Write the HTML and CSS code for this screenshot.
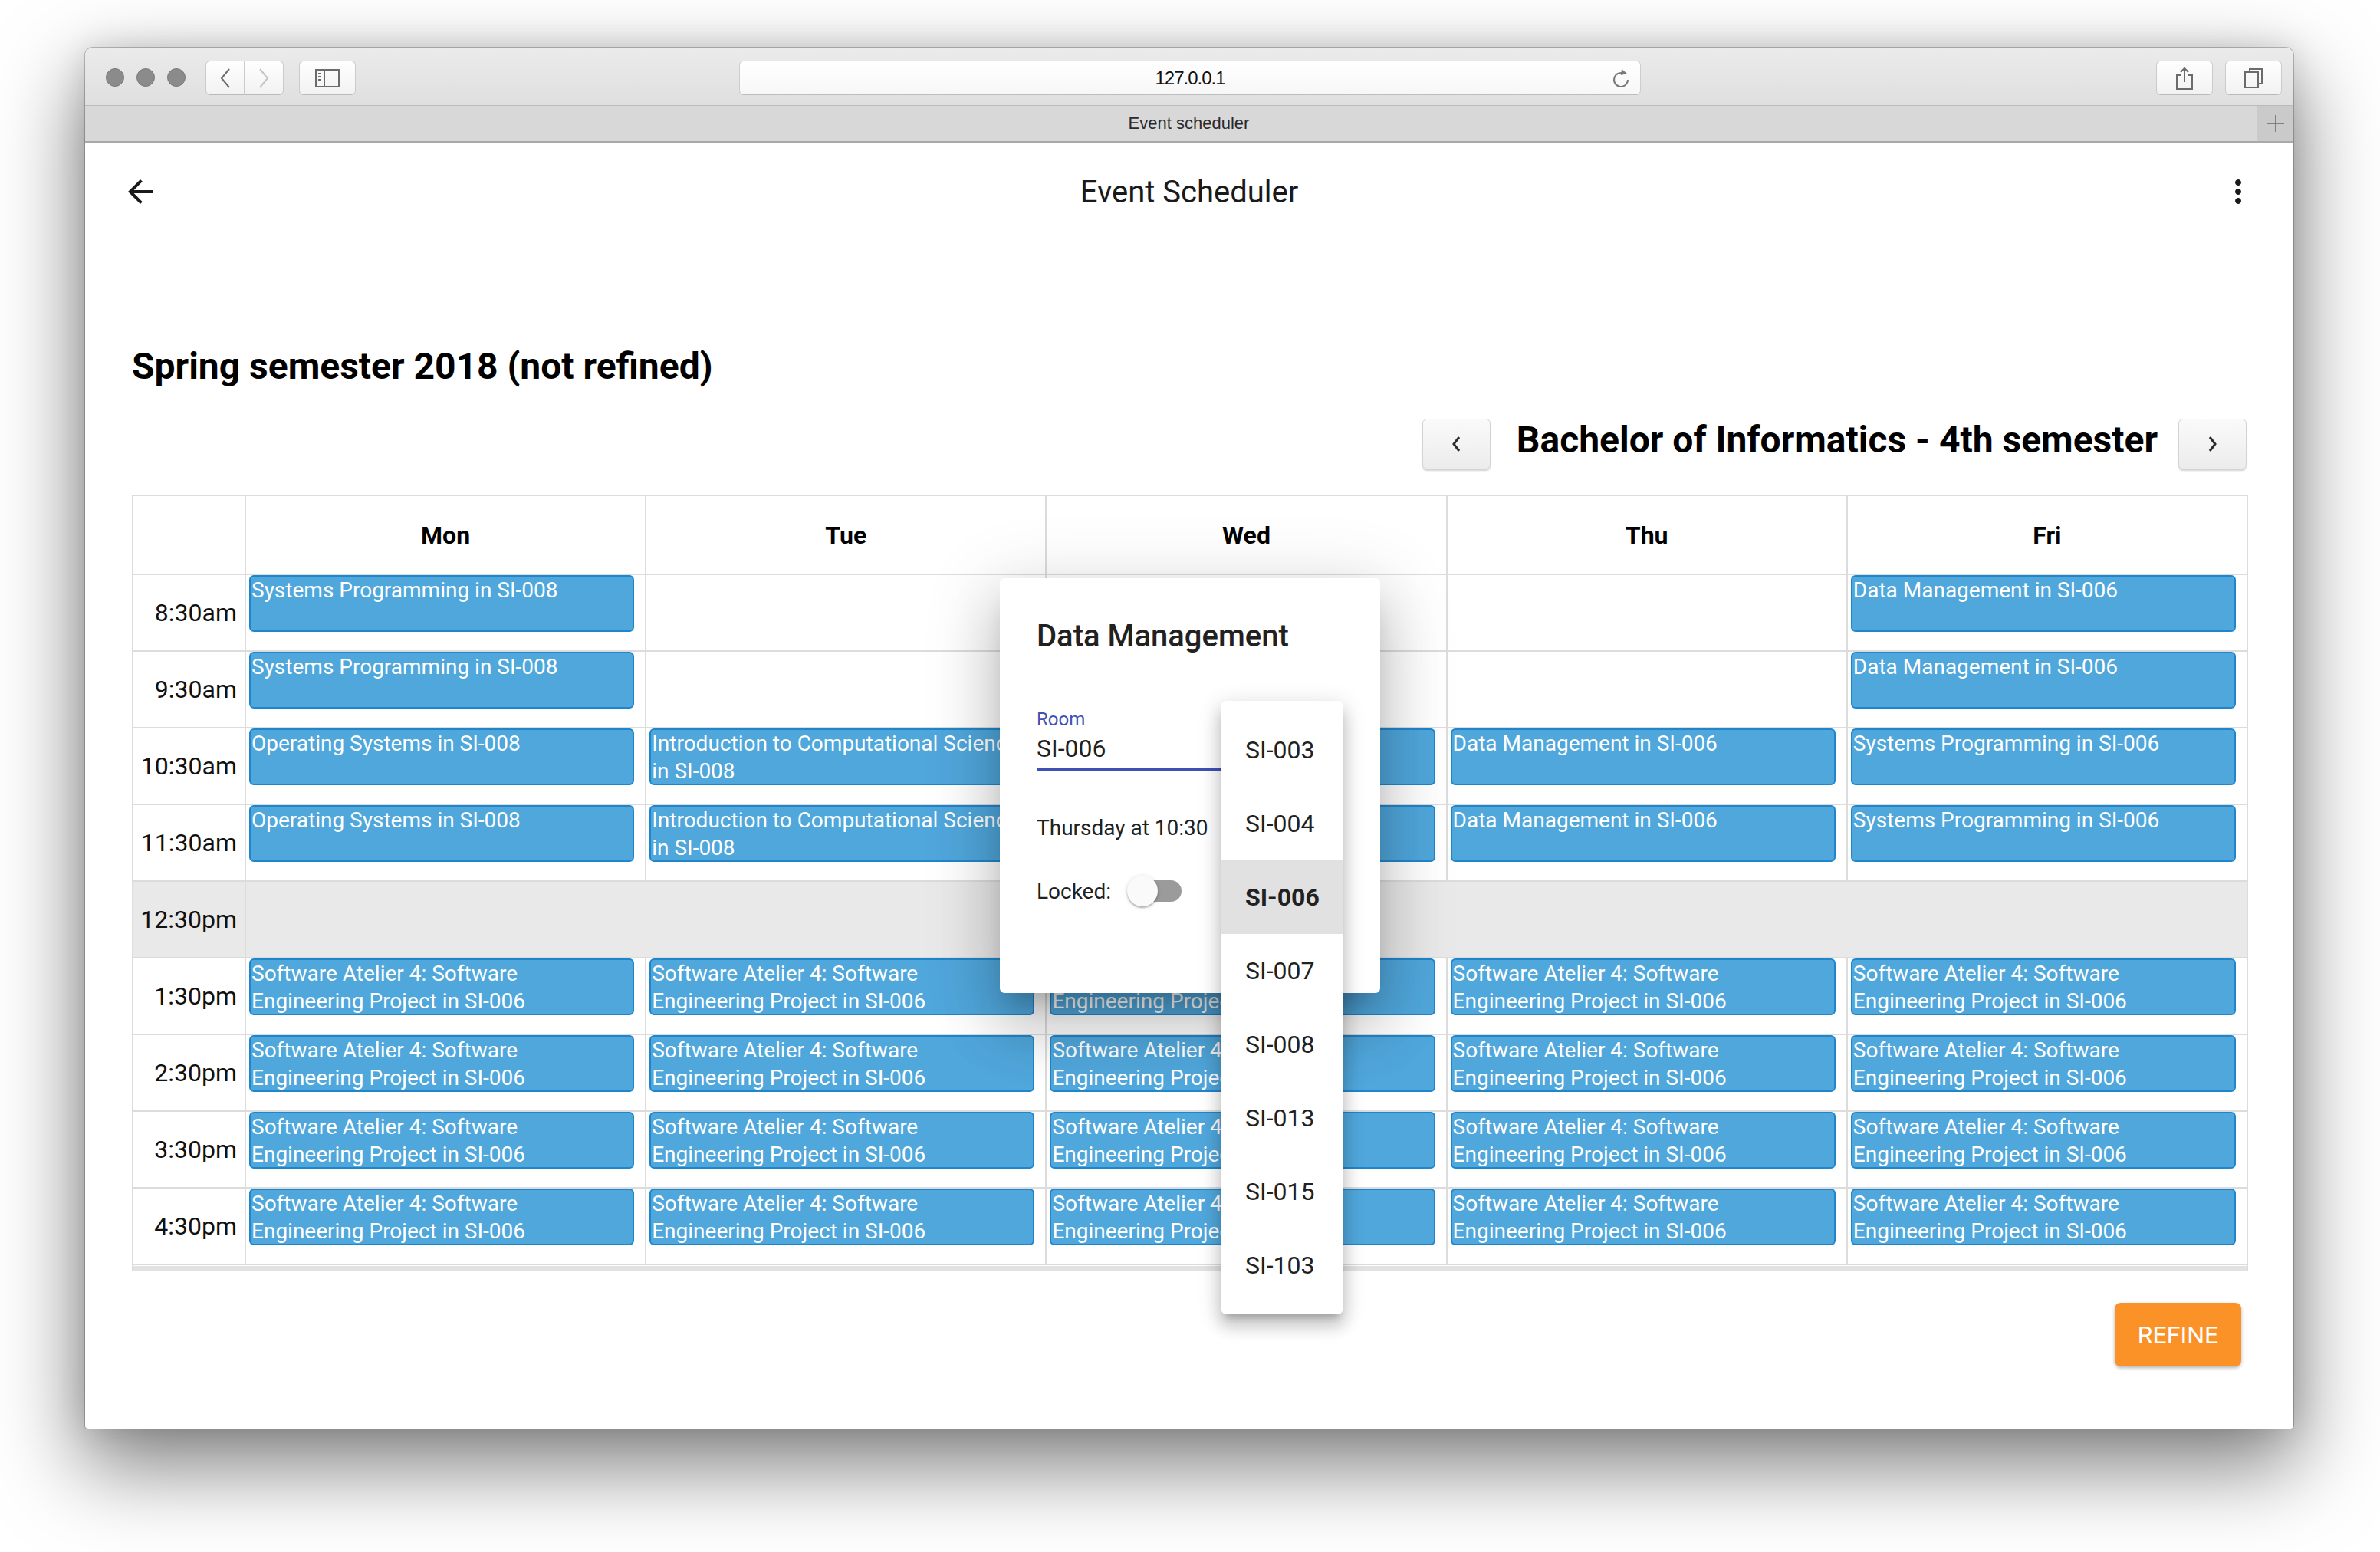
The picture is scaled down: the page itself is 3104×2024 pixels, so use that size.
FILE: index.html
```html
<!DOCTYPE html>
<html lang="en">
<head>
    <meta charset="UTF-8">
    <title>Event scheduler</title>
    <link rel="stylesheet" href="styles.css">
</head>
<body>
    <div class="window">
        <!-- Browser chrome -->
        <div class="toolbar">
            <div class="tb-left">
                <div class="lights"><span></span><span></span><span></span></div>
                <div class="history">
                    <button class="tb-btn hist-btn"><svg width="16" height="26" viewBox="0 0 16 26"><polyline points="13,1 3,13 13,25" fill="none" stroke="#6b6b6b" stroke-width="2"/></svg></button>
                    <button class="tb-btn hist-btn"><svg width="16" height="26" viewBox="0 0 16 26"><polyline points="3,1 13,13 3,25" fill="none" stroke="#c4c4c4" stroke-width="2"/></svg></button>
                </div>
                <button class="tb-btn wide-btn"><svg width="32" height="24" viewBox="0 0 32 24"><rect x="1" y="1" width="30" height="22" fill="none" stroke="#6b6b6b" stroke-width="2"/><line x1="12" y1="1" x2="12" y2="23" stroke="#6b6b6b" stroke-width="2"/><line x1="4" y1="6" x2="8" y2="6" stroke="#6b6b6b" stroke-width="2"/><line x1="4" y1="10" x2="8" y2="10" stroke="#6b6b6b" stroke-width="2"/><line x1="4" y1="14" x2="8" y2="14" stroke="#6b6b6b" stroke-width="2"/></svg></button>
            </div>
            <div class="url">
                <span>127.0.0.1</span>
                <svg class="reload" width="24" height="30" viewBox="0 0 24 30"><path d="M17 9.5A9 9 0 1 0 21 17" fill="none" stroke="#7a7a7a" stroke-width="2"/><path d="M13 3 L20 9 L12 11 Z" fill="#7a7a7a"/></svg>
            </div>
            <div class="tb-right">
                <button class="tb-btn wide-btn"><svg width="24" height="30" viewBox="0 0 24 30"><path d="M8 11H2V29H22V11H16" fill="none" stroke="#6b6b6b" stroke-width="2"/><path d="M12 20V2M7 7L12 2L17 7" fill="none" stroke="#6b6b6b" stroke-width="2"/></svg></button>
                <button class="tb-btn wide-btn"><svg width="24" height="26" viewBox="0 0 24 26"><path d="M7 5V1H23V20H19" fill="none" stroke="#6b6b6b" stroke-width="2"/><rect x="1" y="5" width="17" height="20" fill="none" stroke="#6b6b6b" stroke-width="2"/></svg></button>
            </div>
        </div>
        <div class="tabbar">
            <div class="tab-title">Event scheduler</div>
            <div class="tab-add"><svg width="22" height="22" viewBox="0 0 22 22"><path d="M11 0V22M0 11H22" stroke="#6a6a6a" stroke-width="1.5"/></svg></div>
        </div>

        <!-- App -->
        <header class="appbar">
            <button class="icon-btn"><svg width="48" height="48" viewBox="0 0 24 24"><path d="M20 11H7.83l5.59-5.59L12 4l-8 8 8 8 1.41-1.41L7.83 13H20v-2z" fill="#1a1a1a"/></svg></button>
            <h1 class="app-title">Event Scheduler</h1>
            <button class="icon-btn"><svg width="48" height="48" viewBox="0 0 24 24"><path d="M12 8c1.1 0 2-.9 2-2s-.9-2-2-2-2 .9-2 2 .9 2 2 2zm0 2c-1.1 0-2 .9-2 2s.9 2 2 2 2-.9 2-2-.9-2-2-2zm0 6c-1.1 0-2 .9-2 2s.9 2 2 2 2-.9 2-2-.9-2-2-2z" fill="#1a1a1a"/></svg></button>
        </header>

        <main class="page">
            <h2 class="semester">Spring semester 2018 (not refined)</h2>

            <div class="program-nav">
                <button class="nav-btn"><svg width="16" height="24" viewBox="0 0 16 24"><polyline points="12,3 5,12 12,21" fill="none" stroke="#2a2a2a" stroke-width="3"/></svg></button>
                <h2 class="program">Bachelor of Informatics - 4th semester</h2>
                <button class="nav-btn"><svg width="16" height="24" viewBox="0 0 16 24"><polyline points="4,3 11,12 4,21" fill="none" stroke="#2a2a2a" stroke-width="3"/></svg></button>
            </div>

            <div class="schedule">
                <div class="grid">
                    <div class="cell"></div>
                    <div class="cell day">Mon</div>
                    <div class="cell day">Tue</div>
                    <div class="cell day">Wed</div>
                    <div class="cell day">Thu</div>
                    <div class="cell day">Fri</div>

                    <div class="cell time">8:30am</div>
                    <div class="cell"><div class="event">Systems Programming in SI-008</div></div>
                    <div class="cell"></div>
                    <div class="cell"></div>
                    <div class="cell"></div>
                    <div class="cell"><div class="event">Data Management in SI-006</div></div>

                    <div class="cell time">9:30am</div>
                    <div class="cell"><div class="event">Systems Programming in SI-008</div></div>
                    <div class="cell"></div>
                    <div class="cell"></div>
                    <div class="cell"></div>
                    <div class="cell"><div class="event">Data Management in SI-006</div></div>

                    <div class="cell time">10:30am</div>
                    <div class="cell"><div class="event">Operating Systems in SI-008</div></div>
                    <div class="cell"><div class="event">Introduction to Computational Science in SI-008</div></div>
                    <div class="cell"><div class="event">Operating Systems in SI-008</div></div>
                    <div class="cell"><div class="event">Data Management in SI-006</div></div>
                    <div class="cell"><div class="event">Systems Programming in SI-006</div></div>

                    <div class="cell time">11:30am</div>
                    <div class="cell"><div class="event">Operating Systems in SI-008</div></div>
                    <div class="cell"><div class="event">Introduction to Computational Science in SI-008</div></div>
                    <div class="cell"><div class="event">Operating Systems in SI-008</div></div>
                    <div class="cell"><div class="event">Data Management in SI-006</div></div>
                    <div class="cell"><div class="event">Systems Programming in SI-006</div></div>

                    <div class="cell time lunch">12:30pm</div>
                    <div class="cell lunch lunch-span"></div>

                    <div class="cell time">1:30pm</div>
                    <div class="cell"><div class="event">Software Atelier 4: Software Engineering Project in SI-006</div></div>
                    <div class="cell"><div class="event">Software Atelier 4: Software Engineering Project in SI-006</div></div>
                    <div class="cell"><div class="event">Software Atelier 4: Software Engineering Project in SI-006</div></div>
                    <div class="cell"><div class="event">Software Atelier 4: Software Engineering Project in SI-006</div></div>
                    <div class="cell"><div class="event">Software Atelier 4: Software Engineering Project in SI-006</div></div>

                    <div class="cell time">2:30pm</div>
                    <div class="cell"><div class="event">Software Atelier 4: Software Engineering Project in SI-006</div></div>
                    <div class="cell"><div class="event">Software Atelier 4: Software Engineering Project in SI-006</div></div>
                    <div class="cell"><div class="event">Software Atelier 4: Software Engineering Project in SI-006</div></div>
                    <div class="cell"><div class="event">Software Atelier 4: Software Engineering Project in SI-006</div></div>
                    <div class="cell"><div class="event">Software Atelier 4: Software Engineering Project in SI-006</div></div>

                    <div class="cell time">3:30pm</div>
                    <div class="cell"><div class="event">Software Atelier 4: Software Engineering Project in SI-006</div></div>
                    <div class="cell"><div class="event">Software Atelier 4: Software Engineering Project in SI-006</div></div>
                    <div class="cell"><div class="event">Software Atelier 4: Software Engineering Project in SI-006</div></div>
                    <div class="cell"><div class="event">Software Atelier 4: Software Engineering Project in SI-006</div></div>
                    <div class="cell"><div class="event">Software Atelier 4: Software Engineering Project in SI-006</div></div>

                    <div class="cell time">4:30pm</div>
                    <div class="cell"><div class="event">Software Atelier 4: Software Engineering Project in SI-006</div></div>
                    <div class="cell"><div class="event">Software Atelier 4: Software Engineering Project in SI-006</div></div>
                    <div class="cell"><div class="event">Software Atelier 4: Software Engineering Project in SI-006</div></div>
                    <div class="cell"><div class="event">Software Atelier 4: Software Engineering Project in SI-006</div></div>
                    <div class="cell"><div class="event">Software Atelier 4: Software Engineering Project in SI-006</div></div>
                </div>
                <div class="track"></div>
            </div>

            <button class="refine">REFINE</button>
        </main>

        <!-- Event dialog -->
        <div class="dialog">
            <h3 class="dialog-title">Data Management</h3>
            <div class="field">
                <div class="field-label">Room</div>
                <div class="field-value">SI-006</div>
            </div>
            <p class="when">Thursday at 10:30</p>
            <div class="locked">
                <span>Locked:</span>
                <span class="switch"><span class="switch-track"></span><span class="switch-thumb"></span></span>
            </div>
        </div>

        <!-- Room select menu -->
        <ul class="menu">
            <li>SI-003</li>
            <li>SI-004</li>
            <li class="selected">SI-006</li>
            <li>SI-007</li>
            <li>SI-008</li>
            <li>SI-013</li>
            <li>SI-015</li>
            <li>SI-103</li>
        </ul>
    </div>
</body>
</html>
```

FILE: styles.css
```css
/* Page + window frame */
body { margin: 0; width: 3104px; height: 2024px; overflow: hidden; background: #fff; font-family: Roboto, "Liberation Sans", sans-serif; color: #000; }
.window { position: relative; margin: 62px 0 0 111px; width: 2880px; height: 1801px; background: #fff; border-radius: 10px 10px 4px 4px; box-shadow: 0 0 0 1px rgba(0,0,0,0.22), 0 44px 110px 6px rgba(0,0,0,0.5), 0 0 40px rgba(0,0,0,0.12); }

/* Safari toolbar */
.toolbar { box-sizing: border-box; height: 76px; padding: 17px 15px 0 17px; display: grid; grid-template-columns: 1fr 1176px 1fr; align-items: start; background: linear-gradient(#ecebec, #e0dfe0); border-bottom: 1px solid #bababa; border-radius: 10px 10px 0 0; }
.tb-left { display: flex; align-items: flex-start; }
.tb-right { display: flex; justify-content: flex-end; gap: 16px; }
.lights { display: flex; gap: 16px; margin: 10px 0 0 10px; }
.lights span { width: 22px; height: 22px; border-radius: 50%; background: #8c8b8c; border: 1px solid #7b7a7b; }
.history { display: flex; margin-left: 26px; }
.tb-btn { box-sizing: border-box; height: 45px; padding: 0; display: flex; align-items: center; justify-content: center; background: linear-gradient(#fefefe, #f2f2f2); border: 1px solid #cbcbcb; border-bottom-color: #b9b9b9; border-radius: 6px; }
.hist-btn { width: 51px; }
.hist-btn:first-child { border-radius: 6px 0 0 6px; }
.hist-btn:last-child { border-radius: 0 6px 6px 0; border-left: 0; }
.wide-btn { width: 74px; }
.tb-left .wide-btn { margin-left: 20px; }
.url { position: relative; box-sizing: border-box; height: 45px; display: flex; align-items: center; justify-content: center; background: linear-gradient(#ffffff, #f7f7f7); border: 1px solid #cdcdcd; border-bottom-color: #bdbdbd; border-radius: 6px; font-family: "Liberation Sans", sans-serif; font-size: 24px; letter-spacing: -1px; color: #111; }
.reload { position: absolute; right: 13px; top: 7px; }

/* Tab strip */
.tabbar { display: flex; height: 46px; background: #d9d8d9; border-bottom: 2px solid #a9a9a9; }
.tab-title { flex: 1; padding-left: 47px; display: flex; align-items: center; justify-content: center; font-family: "Liberation Sans", sans-serif; font-size: 22px; color: #2a2a2a; }
.tab-add { width: 47px; display: flex; align-items: center; justify-content: center; background: #cbcacb; border-left: 1px solid #bdbdbd; }

/* App bar */
.appbar { height: 128px; padding: 0 24px; display: flex; align-items: center; }
.icon-btn { width: 96px; height: 96px; padding: 0; border: 0; background: none; display: flex; align-items: center; justify-content: center; }
.app-title { flex: 1; margin: 0; text-align: center; font-size: 40px; font-weight: 400; color: #1a1a1a; }

/* Main page */
.page { padding: 136px 59px 0 61px; display: flex; flex-direction: column; }
.semester { margin: 0; font-size: 48px; line-height: 56px; font-weight: 700; }
.program-nav { margin: 40px 2px 0 0; display: flex; justify-content: flex-end; align-items: flex-start; }
.program { margin: 0 27px 0 34px; font-size: 48px; line-height: 56px; font-weight: 700; }
.nav-btn { box-sizing: border-box; width: 89px; height: 66px; padding: 0; display: flex; align-items: center; justify-content: center; background: linear-gradient(#fafafa, #ececec); border: 1px solid #d3d3d3; border-radius: 6px; box-shadow: 0 2px 2px rgba(0,0,0,0.18); }

/* Schedule table */
.schedule { margin-top: 33px; border: 2px solid #dcdcdc; border-bottom: 0; }
.grid { display: grid; grid-template-columns: 145px repeat(5, 1fr); grid-template-rows: 101px repeat(9, 98px); gap: 2px; padding-bottom: 2px; background: #dcdcdc; }
.cell { background: #fff; min-width: 0; }
.day { display: flex; align-items: center; justify-content: center; font-size: 32px; font-weight: 700; }
.time { display: flex; align-items: center; justify-content: flex-end; padding-right: 10px; font-size: 32px; color: #111; }
.lunch { background: #e9e9e9; }
.lunch-span { grid-column: span 5; }
.track { height: 7px; margin-top: 1px; background: #e2e2e2; }
.event { box-sizing: border-box; height: 74px; margin: 0 14px 0 4px; padding: 0 1px; overflow: hidden; background: #50a7dc; border: 2px solid #1f86cc; border-radius: 6px; color: #fff; font-size: 28px; line-height: 36px; }

.refine { align-self: flex-end; margin: 41px 9px 0 0; width: 165px; height: 83px; padding: 0; border: 0; border-radius: 8px; background: #fb9228; color: #fff; font-family: Roboto, sans-serif; font-size: 32px; box-shadow: 0 2px 4px rgba(0,0,0,0.3); }

/* Dialog */
.dialog { position: absolute; left: 1193px; top: 692px; width: 496px; height: 541px; box-sizing: border-box; padding: 44px 48px 0; background: #fff; border-radius: 6px; box-shadow: 0 22px 30px -14px rgba(0,0,0,0.2), 0 48px 76px 6px rgba(0,0,0,0.14), 0 18px 92px 16px rgba(0,0,0,0.12); }
.dialog-title { margin: 0; font-size: 40px; line-height: 64px; font-weight: 500; color: #212121; }
.field { margin-top: 62px; width: 400px; }
.field-label { font-size: 24px; line-height: 28px; color: #3f51b5; }
.field-value { margin-top: 5px; padding-bottom: 7px; font-size: 32px; line-height: 38px; color: #212121; border-bottom: 4px solid #3f51b5; }
.when { margin: 58px 0 0; font-size: 28px; line-height: 32px; color: #212121; }
.locked { margin-top: 46px; height: 40px; display: flex; align-items: center; font-size: 28px; color: #212121; }
.switch { position: relative; width: 72px; height: 40px; margin-left: 21px; }
.switch-track { position: absolute; left: 3px; top: 6px; width: 68px; height: 28px; border-radius: 14px; background: #9b9b9b; }
.switch-thumb { position: absolute; left: 0; top: 0; width: 40px; height: 40px; border-radius: 50%; background: #fafafa; box-shadow: 0 2px 2px rgba(0,0,0,0.24), 0 1px 6px rgba(0,0,0,0.14); }

/* Select menu */
.menu { position: absolute; left: 1481px; top: 852px; width: 160px; margin: 0; padding: 16px 0; list-style: none; background: #fff; border-radius: 8px; box-shadow: 0 10px 10px -6px rgba(0,0,0,0.2), 0 16px 20px 2px rgba(0,0,0,0.14), 0 6px 28px 4px rgba(0,0,0,0.12); }
.menu li { height: 96px; line-height: 96px; padding-left: 32px; font-size: 32px; color: #212121; }
.menu li.selected { background: #e1e1e1; font-weight: 700; }
```
